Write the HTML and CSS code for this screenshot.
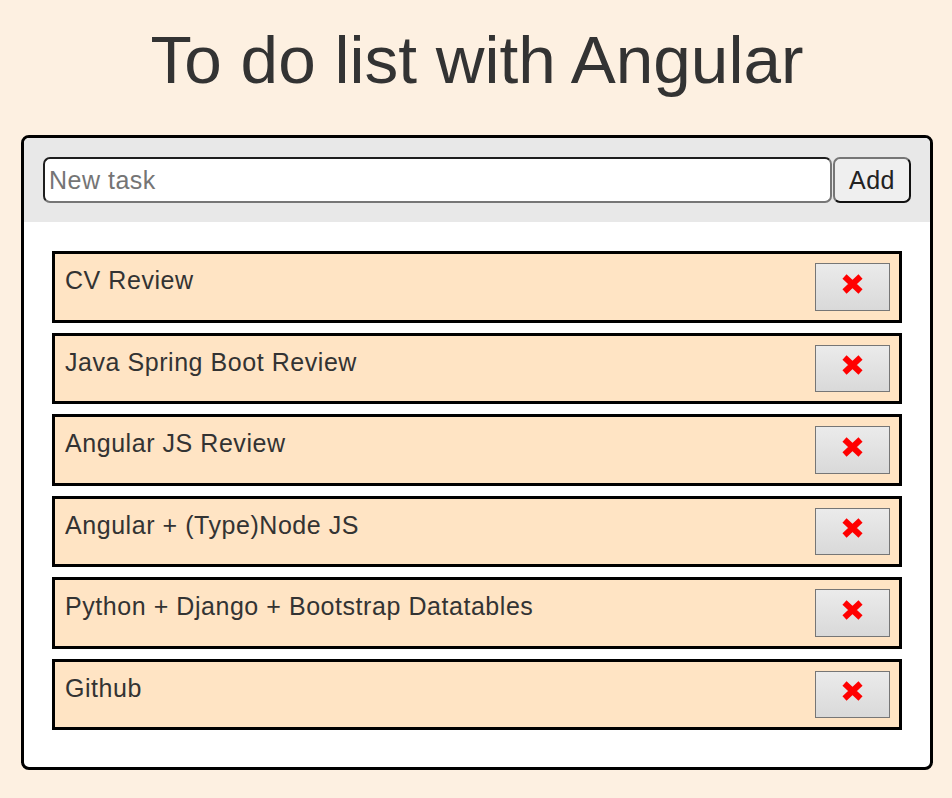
FILE: index.html
```html
<!DOCTYPE html>
<html lang="en">
<head>
<meta charset="utf-8">
<title>To do list with Angular</title>
<link rel="stylesheet" href="styles.css">
</head>
<body>
<h1 class="title">To do list with Angular</h1>
<div class="todo">
  <div class="todo-header">
    <input class="task-input" type="text" placeholder="New task">
    <button class="add-btn" type="button">Add</button>
  </div>
  <ul class="task-list">
    <li class="task"><span class="task-text">CV Review</span><button class="del-btn" type="button"><svg class="x-icon" viewBox="0 0 23 22" width="23" height="22"><path d="M3.5 3.5 L19.5 18.5 M19.5 3.5 L3.5 18.5" stroke="#ff0000" stroke-width="6" fill="none"/></svg></button></li>
    <li class="task"><span class="task-text">Java Spring Boot Review</span><button class="del-btn" type="button"><svg class="x-icon" viewBox="0 0 23 22" width="23" height="22"><path d="M3.5 3.5 L19.5 18.5 M19.5 3.5 L3.5 18.5" stroke="#ff0000" stroke-width="6" fill="none"/></svg></button></li>
    <li class="task"><span class="task-text">Angular JS Review</span><button class="del-btn" type="button"><svg class="x-icon" viewBox="0 0 23 22" width="23" height="22"><path d="M3.5 3.5 L19.5 18.5 M19.5 3.5 L3.5 18.5" stroke="#ff0000" stroke-width="6" fill="none"/></svg></button></li>
    <li class="task"><span class="task-text">Angular + (Type)Node JS</span><button class="del-btn" type="button"><svg class="x-icon" viewBox="0 0 23 22" width="23" height="22"><path d="M3.5 3.5 L19.5 18.5 M19.5 3.5 L3.5 18.5" stroke="#ff0000" stroke-width="6" fill="none"/></svg></button></li>
    <li class="task"><span class="task-text">Python + Django + Bootstrap Datatables</span><button class="del-btn" type="button"><svg class="x-icon" viewBox="0 0 23 22" width="23" height="22"><path d="M3.5 3.5 L19.5 18.5 M19.5 3.5 L3.5 18.5" stroke="#ff0000" stroke-width="6" fill="none"/></svg></button></li>
    <li class="task"><span class="task-text">Github</span><button class="del-btn" type="button"><svg class="x-icon" viewBox="0 0 23 22" width="23" height="22"><path d="M3.5 3.5 L19.5 18.5 M19.5 3.5 L3.5 18.5" stroke="#ff0000" stroke-width="6" fill="none"/></svg></button></li>
  </ul>
</div>
</body>
</html>
```

FILE: styles.css
```css
html, body {
  margin: 0;
  padding: 0;
}
body {
  background: #fdf0e1;
  font-family: "Liberation Sans", Arial, sans-serif;
  color: #333;
  padding: 0 19px 0 21px;
}
.title {
  margin: 22px 0 37px;
  font-size: 67.5px;
  line-height: 76px;
  font-weight: normal;
  text-align: center;
  color: #333;
}
.todo {
  border: 3px solid #000;
  border-radius: 8px;
  background: #fff;
  overflow: hidden;
}
.todo-header {
  background: #e8e8e8;
  padding: 19px;
  display: flex;
  gap: 1px;
}
.task-input {
  flex: 1;
  min-width: 0;
  height: 46px;
  box-sizing: border-box;
  border: 2px solid;
  border-color: #1e1e1e #767676 #767676 #1e1e1e;
  border-radius: 7px;
  padding: 1px 4px;
  font-family: "Liberation Sans", Arial, sans-serif;
  font-size: 25px;
  letter-spacing: 0.5px;
  color: #333;
  background: #fff;
  outline: none;
}
.task-input::placeholder {
  color: #757575;
}
.add-btn {
  width: 78px;
  height: 46px;
  box-sizing: border-box;
  border: 2px solid;
  border-color: #767676 #111 #111 #767676;
  border-radius: 7px;
  background: #efefef;
  font-family: "Liberation Sans", Arial, sans-serif;
  font-size: 25px;
  letter-spacing: 0.5px;
  color: #222;
  padding: 0;
}
.task-list {
  list-style: none;
  margin: 0;
  padding: 29px 28px 27px;
}
.task {
  display: flex;
  justify-content: space-between;
  align-items: flex-start;
  border: 3px solid #000;
  background: #ffe4c4;
  padding: 9px 9px 9px 10px;
  margin-bottom: 10px;
}
.task-text {
  margin-top: 3px;
  font-size: 25px;
  letter-spacing: 0.55px;
  line-height: 28px;
  color: #333;
}
.del-btn {
  width: 75px;
  height: 47.5px;
  box-sizing: border-box;
  border: 1px solid #767676;
  background: linear-gradient(#ebebeb, #d9d9d9);
  padding: 0 0 6px;
  display: flex;
  align-items: center;
  justify-content: center;
}
.x-icon {
  display: block;
}
```
